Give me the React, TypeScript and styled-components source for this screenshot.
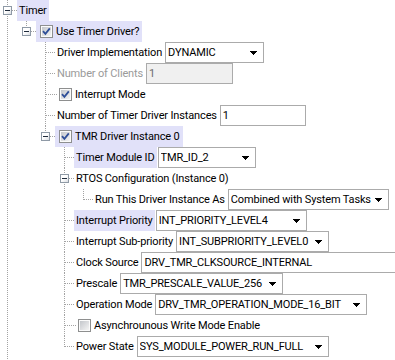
import React from 'react'
import styled, { createGlobalStyle } from 'styled-components'

const GlobalStyle = createGlobalStyle`
  html, body {
    margin: 0;
    padding: 0;
    background: #ffffff;
  }
  body {
    font-family: Roboto, "Liberation Sans", Arial, sans-serif;
    font-size: 11px;
    letter-spacing: -0.15px;
    color: #000000;
    overflow: hidden;
  }
`

const ROW_H = 21
const INDENT = 19
const HILITE = '#e1e1f9'
const DOTS = '#a3a3a3'

type Control = { kind: 'select' | 'text'; value: string; width: number; off?: boolean }
type Item = {
  text: string
  check?: boolean
  checked?: boolean
  hl?: boolean
  dim?: boolean
  control?: Control
  children?: Item[]
}

const Tree = styled.div`
  height: 360px;
  overflow: hidden;
`

const List = styled.ul<{ $root?: boolean }>`
  list-style: none;
  margin: 0;
  padding: 0 0 0 ${(p) => (p.$root ? 7 : INDENT)}px;
`

const Node = styled.li<{ $last?: boolean; $tail?: boolean }>`
  position: relative;

  &::before {
    content: '';
    position: absolute;
    left: 0;
    top: 0;
    width: 1px;
    ${(p) => (p.$last ? 'height: 11px;' : `bottom: ${p.$tail ? -40 : 0}px;`)}
    background: repeating-linear-gradient(to bottom, ${DOTS} 0 1px, transparent 1px 2px);
  }
`

const Row = styled.div<{ $stub: number }>`
  position: relative;
  display: flex;
  align-items: center;
  height: ${ROW_H}px;
  padding-left: 10px;
  white-space: nowrap;

  &::before {
    content: '';
    position: absolute;
    left: 1px;
    top: 10px;
    width: ${(p) => p.$stub}px;
    height: 1px;
    background: repeating-linear-gradient(to right, ${DOTS} 0 1px, transparent 1px 2px);
  }
`

const Expander = styled.span`
  position: absolute;
  left: -4px;
  top: 6px;
  width: 9px;
  height: 9px;
  box-sizing: border-box;
  border: 1px solid #8f9aa6;
  background: linear-gradient(135deg, #ffffff 45%, #dadde2);
  z-index: 1;

  &::after {
    content: '';
    position: absolute;
    left: 1px;
    top: 3px;
    width: 5px;
    height: 1px;
    background: #1f2a3a;
  }
`

const Label = styled.span<{ $hl?: boolean; $dim?: boolean }>`
  display: inline-flex;
  align-items: center;
  height: 100%;
  padding: 0 2px;
  background: ${(p) => (p.$hl ? HILITE : 'transparent')};
  color: ${(p) => (p.$dim ? '#9a9a9a' : '#000000')};
`

const CheckItem = styled.span<{ $hl?: boolean }>`
  display: inline-flex;
  align-items: center;
  gap: 3px;
  height: 100%;
  padding: 0 3px 0 4px;
  background: ${(p) => (p.$hl ? HILITE : 'transparent')};
`

const Box = styled.span`
  position: relative;
  flex: none;
  width: 13px;
  height: 13px;
  box-sizing: border-box;
  border: 1px solid #8e8f8f;
  padding: 1px;
  background: linear-gradient(135deg, #c3c6cb, #f4f4f4) content-box, #fbfbfb;

  svg {
    position: absolute;
    left: 0;
    top: 0;
  }
`

const Field = styled.span<{ $w: number; $off?: boolean }>`
  display: flex;
  align-items: center;
  flex: none;
  width: ${(p) => p.$w}px;
  height: 21px;
  box-sizing: border-box;
  margin-left: 1px;
  padding: 0 6px 0 2px;
  border: 1px solid #ababab;
  background: ${(p) => (p.$off ? '#f0f0f0' : '#ffffff')};
  color: ${(p) => (p.$off ? '#6d6d6d' : '#000000')};
`

const Value = styled.span`
  flex: 1;
  overflow: hidden;
`

const CheckBox = ({ checked }: { checked?: boolean }) => (
  <Box>
    {checked && (
      <svg width="11" height="11" viewBox="0 0 11 11">
        <polyline points="2,5.2 4.4,7.8 8.8,2.4" fill="none" stroke="#2f4f98" strokeWidth="1.8" />
      </svg>
    )}
  </Box>
)

const Arrow = () => (
  <svg width="7" height="4" viewBox="0 0 7 4">
    <rect x="0" y="0" width="7" height="1" fill="#000" />
    <rect x="1" y="1" width="5" height="1" fill="#000" />
    <rect x="2" y="2" width="3" height="1" fill="#000" />
    <rect x="3" y="3" width="1" height="1" fill="#000" />
  </svg>
)

const data: Item = {
  text: 'Timer',
  hl: true,
  children: [
    {
      text: 'Use Timer Driver?',
      check: true,
      checked: true,
      hl: true,
      children: [
        { text: 'Driver Implementation', control: { kind: 'select', value: 'DYNAMIC', width: 99 } },
        { text: 'Number of Clients', dim: true, control: { kind: 'text', value: '1', width: 87, off: true } },
        { text: 'Interrupt Mode', check: true, checked: true },
        { text: 'Number of Timer Driver Instances', control: { kind: 'text', value: '1', width: 86 } },
        {
          text: 'TMR Driver Instance 0',
          check: true,
          checked: true,
          hl: true,
          children: [
            { text: 'Timer Module ID', hl: true, control: { kind: 'select', value: 'TMR_ID_2', width: 98 } },
            {
              text: 'RTOS Configuration (Instance 0)',
              children: [
                {
                  text: 'Run This Driver Instance As',
                  control: { kind: 'select', value: 'Combined with System Tasks', width: 161 },
                },
              ],
            },
            { text: 'Interrupt Priority', hl: true, control: { kind: 'select', value: 'INT_PRIORITY_LEVEL4', width: 151 } },
            { text: 'Interrupt Sub-priority', control: { kind: 'select', value: 'INT_SUBPRIORITY_LEVEL0', width: 153 } },
            { text: 'Clock Source', control: { kind: 'text', value: 'DRV_TMR_CLKSOURCE_INTERNAL', width: 300 } },
            { text: 'Prescale', control: { kind: 'select', value: 'TMR_PRESCALE_VALUE_256', width: 163 } },
            {
              text: 'Operation Mode',
              control: { kind: 'select', value: 'DRV_TMR_OPERATION_MODE_16_BIT', width: 212 },
            },
            { text: 'Asynchrounous Write Mode Enable', check: true },
            { text: 'Power State', control: { kind: 'select', value: 'SYS_MODULE_POWER_RUN_FULL', width: 192 } },
          ],
        },
      ],
    },
  ],
}

const TreeNode = ({ item, last, tail }: { item: Item; last?: boolean; tail?: boolean }) => {
  const kids = item.children
  const c = item.control
  return (
    <Node $last={last} $tail={tail}>
      <Row $stub={item.check && !kids ? 12 : 9}>
        {kids && <Expander />}
        {item.check ? (
          <CheckItem $hl={item.hl}>
            <CheckBox checked={item.checked} />
            {item.text}
          </CheckItem>
        ) : (
          <Label $hl={item.hl} $dim={item.dim}>
            {item.text}
          </Label>
        )}
        {c && (
          <Field $w={c.width} $off={c.off}>
            <Value>{c.value}</Value>
            {c.kind === 'select' && <Arrow />}
          </Field>
        )}
      </Row>
      {kids && (
        <List>
          {kids.map((k, i) => (
            <TreeNode key={k.text} item={k} last={i === kids.length - 1} />
          ))}
        </List>
      )}
    </Node>
  )
}

export default function App() {
  return (
    <>
      <GlobalStyle />
      <Tree>
        <List $root>
          <TreeNode item={data} tail />
        </List>
      </Tree>
    </>
  )
}
